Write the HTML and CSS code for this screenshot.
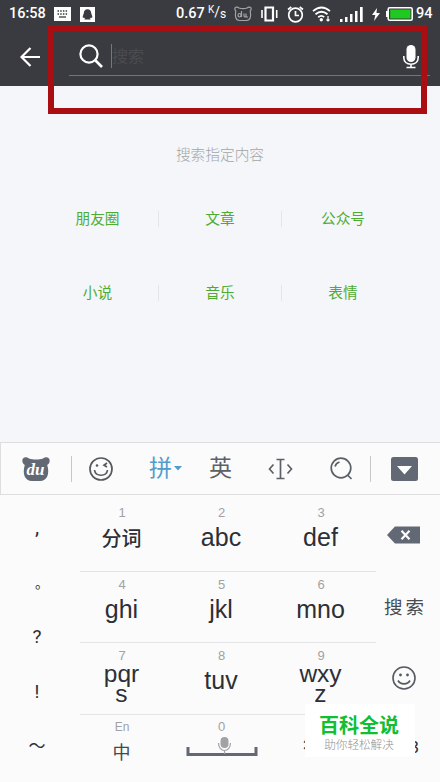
FILE: index.html
```html
<!DOCTYPE html>
<html lang="zh-CN">
<head>
    <meta charset="UTF-8">
    <meta name="viewport" content="width=device-width, initial-scale=1.0">
    <title>搜索</title>
    <link rel="stylesheet" href="styles.css">
</head>
<body>
    <div class="phone">
        <header class="top">
            <div class="status">
                <span class="time">16:58</span>
                <svg class="st-keys" width="17" height="14" viewBox="0 0 17 14"><path fill="#fff" d="M0 0h17v14H0z"/><path stroke="#3a3b40" stroke-width="1.5" stroke-dasharray="1.5 1.2" d="M3.5 4h10M3.5 7h10"/><path stroke="#3a3b40" stroke-width="1.3" d="M5 10h7"/></svg>
                <svg class="st-qq" width="15" height="15" viewBox="0 0 15 15"><path fill="#fff" d="M0 0h15v15H0z"/><path fill="#3a3b40" d="M7.500 2.300C5 2.300 3.800 4 3.800 6.300L2.700 9.500l.2 1.500 1.200-.6.900 1.400-.8.800h6.600l-.8-.8.900-1.400 1.200.6.200-1.500-1.100-3.200C11.200 4 10 2.300 7.500 2.300z"/></svg>
                <span class="speed">0.67</span>
                <span class="unit"><sup>K</sup>/<sub>s</sub></span>
                <svg class="st-bear" width="18" height="16" viewBox="0 0 18 16" fill="none" stroke="#a3a4a7" stroke-width="1.200"><path d="M5 2C3 .2.700 1.200.8 3c0 1 .7 1.500 1 2-1 5-.3 9.500 3.700 9.500h7c4 0 4.700-4.500 3.700-9.500.3-.5 1-1 1-2C17.300 1.200 15 .2 13 2 10 3 8 3 5 2z"/><path d="M7.500 5v6M5.500 7.500c-2 0-2 3.500 0 3.500s2-3.500 0-3.500M10 7.500V10q1 2 2 0V7.500V11h2"/></svg>
                <svg class="st-vib" width="17" height="16" viewBox="0 0 17 16" fill="none" stroke="#fff"><path stroke-width="2.200" d="M4.500 1.500h7.500v13H4.500z"/><path stroke-width="1.600" d="M1 4v8M15.700 4v8"/></svg>
                <svg class="st-alarm" width="17" height="17" viewBox="0 0 17 17" fill="none" stroke="#fff" stroke-width="1.700"><circle cx="8.500" cy="9" r="6.800"/><path d="M8.500 5v4.500H12M1 3.500L4.300 1M16 3.500L12.700 1"/></svg>
                <svg class="st-wifi" width="19" height="16" viewBox="0 0 19 16" fill="none" stroke="#fff" stroke-width="1.800"><path d="M1 5.200q8.500-7.500 17 0M3.500 8.300q6-5.200 12 0M6.200 11.200q3.300-2.600 6 0"/><circle cx="9.300" cy="13.700" r="1.700" fill="#fff" stroke="none"/><path stroke-width="1.200" d="M16 10v5M14.500 13.500L16 15l1.500-1.500"/></svg>
                <svg class="st-signal" width="23" height="15" viewBox="0 0 23 15"><path fill="#fff" d="M0 12h2.500v3H0zM5 10h2.500v5H5zM10 7h2.500v8H10zM15 4h2.500v11H15zM20 0h2.700v15H20z"/></svg>
                <svg class="st-bolt" width="8" height="13" viewBox="0 0 8 13"><path fill="#fff" d="M5 0L0 7h3.300L2 13l6-8H4.500z"/></svg>
                <svg class="st-battery" width="27" height="14" viewBox="0 0 27 14"><path fill="#fff" d="M0 4h3v6H0z"/><rect x="2.200" y=".8" width="24" height="12.400" rx="1.500" fill="#3a3b40" stroke="#fff" stroke-width="1.600"/><path fill="#1fc91f" d="M4.200 2.500H24.500v9H4.200z"/></svg>
                <span class="percent">94</span>
            </div>
            <div class="search-bar">
                <svg class="back" width="20" height="20" viewBox="0 0 20 20" fill="none" stroke="#fff" stroke-width="2.200"><path d="M20 10H2M10.500 1L1.500 10l9 9"/></svg>
                <div class="field">
                    <svg class="search-icon" width="24" height="24" viewBox="0 0 24 24" fill="none" stroke="#fff" stroke-width="2.200"><circle cx="10" cy="10" r="8.600"/><path stroke-width="2.600" d="M16 16l7 7"/></svg>
                    <span class="placeholder">搜索</span>
                    <svg class="mic" width="16" height="25" viewBox="0 0 16 25"><rect x="3.500" y="1" width="9" height="17" rx="4.500" fill="#fff"/><path fill="none" stroke="#fff" stroke-width="1.600" d="M.8 12v1.500c0 4 3 6.700 7.200 6.700s7.200-2.700 7.200-6.700V12M8 20v3M3.500 23.500h9"/></svg>
                </div>
            </div>
        </header>

        <main class="content">
            <p class="hint">搜索指定内容</p>
            <div class="topics">
                <a>朋友圈</a><a>文章</a><a>公众号</a>
                <a>小说</a><a>音乐</a><a>表情</a>
            </div>
        </main>

        <section class="keyboard">
            <div class="toolbar">
                <svg class="tb-bear" width="28" height="26" viewBox="0 0 28 26"><path fill="#626974" d="M7 2.500C4 0 0 1.500.3 5c.1 2 1.200 3.200 2.500 4C0 18 3 25 10 25h8c7 0 10-7 7.200-16 1.300-.8 2.400-2 2.500-4C28 1.500 24 0 21 2.500c-4 1.300-10 1.300-14 0z"/><text x="13.500" y="18.500" class="du">du</text></svg>
                <i class="bar bar-left"></i>
                <svg class="tb-smile" width="24" height="24" viewBox="0 0 24 24" fill="none" stroke="#555a61" stroke-width="1.700"><circle cx="12" cy="12" r="11"/><path d="M5.500 13c1 7 12 7 13 0M18 6l-3 2.200 3 1.800"/><circle cx="8" cy="8.500" r="1.300" fill="#555a61" stroke="none"/></svg>
                <span class="pin">拼</span>
                <svg class="tb-caret" width="8" height="5" viewBox="0 0 8 5"><path fill="#519ccd" d="M0 0h8L4 4.500z"/></svg>
                <span class="ying">英</span>
                <svg class="tb-cursor" width="25" height="22" viewBox="0 0 25 22" fill="none" stroke="#5c6168" stroke-width="1.700"><path d="M12.500 1.500v19M8.500 1.500h8M8.500 20.500h8M5.500 6.500L1.500 11l4 4.500M19.500 6.500l4 4.500-4 4.500"/></svg>
                <svg class="tb-search" width="23" height="23" viewBox="0 0 23 23" fill="none" stroke="#5c6168" stroke-width="1.700"><circle cx="11" cy="11" r="9.800"/><path d="M5 9.500Q6 6 9.500 5M17.500 18l4 4"/></svg>
                <i class="bar bar-right"></i>
                <svg class="tb-down" width="27" height="24" viewBox="0 0 27 24"><rect width="27" height="24" rx="2.500" fill="#626974"/><path fill="#fff" d="M6 9h15l-7.500 8.500z"/></svg>
            </div>
            <div class="keys">
                <div class="marks">
                    <span>,</span><span>。</span><span>?</span><span>!</span><span>～</span>
                </div>
                <div class="letters">
                    <div class="key"><small>1</small><b class="word">分词</b></div>
                    <div class="key"><small>2</small><b>abc</b></div>
                    <div class="key"><small>3</small><b>def</b></div>
                    <div class="key"><small>4</small><b>ghi</b></div>
                    <div class="key"><small>5</small><b>jkl</b></div>
                    <div class="key"><small>6</small><b>mno</b></div>
                    <div class="key"><small>7</small><b class="two">pqr<br>s</b></div>
                    <div class="key"><small>8</small><b>tuv</b></div>
                    <div class="key"><small>9</small><b class="two">wxy<br>z</b></div>
                    <div class="key last"><small class="en">En</small><b class="zh">中</b></div>
                    <div class="key last"><small>0</small>
                        <svg class="space" width="72" height="22" viewBox="0 0 72 22"><path fill="none" stroke="#626974" stroke-width="3" d="M2 10v7.500h68V10"/><rect x="34.500" y="0" width="8" height="11" rx="4" fill="#a0a2a5"/><path fill="none" stroke="#a0a2a5" stroke-width="1.200" d="M32.500 6c0 10 12 10 12 0M38.500 13v4"/></svg>
                    </div>
                    <div class="key last"><b class="symbol">符号</b></div>
                </div>
                <div class="actions">
                    <svg class="delete" width="33" height="18" viewBox="0 0 33 18"><path fill="#626974" d="M8 .5h25v17H8L0 9z"/><path stroke="#fff" stroke-width="2.200" d="M14.500 4.800l8 8.400M22.500 4.800l-8 8.400"/></svg>
                    <span class="go">搜索</span>
                    <svg class="face" width="24" height="24" viewBox="0 0 24 24" fill="none" stroke="#555a61" stroke-width="1.600"><circle cx="12" cy="12" r="11"/><path d="M6 14.500c2.500 4.500 9.500 4.500 12 0"/><g fill="#555a61" stroke="none"><circle cx="8.500" cy="9" r="1.400"/><circle cx="15.500" cy="9" r="1.400"/></g></svg>
                    <span class="num">123</span>
                </div>
            </div>
        </section>

        <div class="highlight"></div>
        <div class="brand">
            <strong>百科全说</strong>
            <span>助你轻松解决</span>
        </div>
    </div>
</body>
</html>
```
FILE: styles.css
```css
* {
    box-sizing: border-box;
}
body {
    margin: 0;
    font-family: Roboto, "Noto Sans CJK SC", sans-serif;
}
svg {
    display: block;
    flex: none;
}
.phone {
    position: relative;
    width: 440px;
    height: 782px;
    overflow: hidden;
    display: flex;
    flex-direction: column;
    background: #f4f6f9;
}

/* header */
.top {
    height: 86px;
    background: #3a3b40;
    color: #fff;
}
.status {
    display: flex;
    align-items: center;
    height: 28px;
    padding-left: 9px;
    font-size: 14.5px;
    font-weight: 500;
    line-height: 28px;
    white-space: nowrap;
}
.time {
    width: 45px;
}
.st-qq {
    margin-left: 9px;
}
.speed {
    width: 32px;
    margin-left: 81px;
}
.unit {
    display: flex;
    width: 26px;
    font-size: 14px;
    font-weight: normal;
}
.unit sup,
.unit sub {
    font-size: 10px;
    line-height: 23px;
}
.unit sub {
    font-size: 12px;
    line-height: 32px;
}
.st-vib {
    margin-left: 9px;
}
.st-alarm {
    margin-left: 9px;
}
.st-wifi {
    margin-left: 8px;
}
.st-signal {
    margin-left: 9px;
}
.st-bolt {
    margin-left: 9px;
}
.st-battery {
    margin-left: 6px;
}
.percent {
    margin-left: 3px;
}
.search-bar {
    display: flex;
    height: 48px;
    padding-left: 20px;
}
.back {
    margin-top: 19px;
}
.field {
    display: flex;
    width: 361px;
    margin-left: 29px;
    padding-left: 10px;
    border-bottom: 1px solid #4a963d;
}
.search-icon {
    margin-top: 16px;
}
.placeholder {
    height: 24px;
    margin: 16px 0 0 8px;
    border-left: 1px solid #77787c;
    color: #4a4b4f;
    font-size: 16px;
    line-height: 25px;
}
.mic {
    margin: 16px 11px 0 auto;
}

/* search topics */
.content {
    height: 356px;
    padding-top: 56px;
}
.hint {
    margin: 0;
    color: #a3a5a7;
    font-size: 14.7px;
    font-weight: 300;
    line-height: 26px;
    text-align: center;
}
.topics {
    display: grid;
    grid-template-columns: repeat(3, 122.5px);
    row-gap: 57.5px;
    justify-content: center;
    margin-top: 43px;
    padding-left: 1px;
}
.topics a {
    height: 16px;
    border-right: 1px solid #e3e5e8;
    color: #4eac31;
    font-size: 14.7px;
    line-height: 17px;
    text-align: center;
}
.topics a:nth-child(3n) {
    border-right: 0;
}

/* keyboard */
.keyboard {
    height: 340px;
    background: #fbfbfb;
    color: #2c3036;
}
.toolbar {
    display: flex;
    align-items: center;
    height: 53px;
    padding-left: 21px;
    border: 1px solid #dedede;
    border-right: 0;
}
.du {
    fill: #fff;
    font: italic bold 17px "Liberation Serif", serif;
    text-anchor: middle;
}
.bar {
    width: 1px;
    height: 26px;
    background: #c6c8ca;
}
.bar-left {
    margin-left: 21px;
}
.tb-smile {
    margin-left: 17px;
}
.pin,
.ying {
    width: 23px;
    color: #5c6168;
    font-size: 23px;
    line-height: 28px;
}
.pin {
    margin-left: 36px;
    color: #519ccd;
}
.tb-caret {
    margin-left: 2px;
}
.ying {
    margin-left: 27px;
}
.tb-cursor {
    margin-left: 36px;
}
.tb-search {
    margin-left: 37px;
}
.bar-right {
    margin-left: 17px;
}
.tb-down {
    margin-left: 20px;
}
.keys {
    display: flex;
    height: 287px;
}
.marks {
    display: grid;
    grid-template-rows: repeat(5, 52.6px);
    width: 80px;
    padding: 13px 6px 0 0;
    font-size: 19px;
    line-height: 52px;
    text-align: center;
}
.marks span:first-child {
    font-size: 21px;
    line-height: 38px;
}
.marks span:nth-child(2) {
    padding-left: 10px;
    font-size: 14px;
    line-height: 45px;
}
.marks span:nth-child(3) {
    line-height: 47px;
}
.marks span:last-child {
    font-size: 17px;
    line-height: 57px;
}
.letters {
    display: grid;
    grid-template-columns: 84px 115px 97px;
    grid-template-rows: 77px 71px 72px 67px;
    width: 296px;
}
.key {
    display: flex;
    flex-direction: column;
    align-items: center;
    padding-top: 6px;
    border-bottom: 1px solid #e2e3e4;
    font-family: "Liberation Sans", "Noto Sans CJK SC", sans-serif;
}
.key:nth-child(-n+3) {
    padding-top: 11px;
}
.key:nth-child(3n) {
    padding-right: 13px;
}
.key small {
    color: #a0a2a5;
    font-size: 13px;
    line-height: 14px;
}
.key b {
    margin-top: 2px;
    margin-right: 1px;
    font-size: 25px;
    font-weight: normal;
    line-height: 30px;
}
.key .word {
    font-size: 20px;
    font-weight: 500;
    line-height: 34px;
}
.key .two {
    margin-top: 1px;
    font-size: 24.5px;
    line-height: 20px;
    text-align: center;
}
.key.last {
    border-bottom: 0;
    padding-top: 5px;
}
.key small.en {
    font-size: 12px;
}
.key .zh {
    margin-top: 4px;
    color: #44484d;
    font-size: 18px;
}
.key .symbol {
    margin: 12px 0 0;
    font-size: 18px;
}
.space {
    margin-top: 3px;
}
.actions {
    display: grid;
    grid-template-rows: 77px 71px 72px 67px;
    justify-items: center;
    align-items: center;
    width: 64px;
    padding-right: 7px;
}
.delete {
    margin: 2px 0 0 -2px;
}
.go {
    margin: 0 0 4px 2px;
    color: #484c52;
    font-size: 18.5px;
    letter-spacing: 3px;
    white-space: nowrap;
}
.face {
    margin: 0 2px 2px 0;
}
.num {
    margin: 0 0 2px;
    font: 17px "Liberation Sans", sans-serif;
}

/* overlays */
.highlight {
    position: absolute;
    top: 25px;
    left: 48px;
    width: 379px;
    height: 89px;
    border: 6px solid #a90e13;
}
.brand {
    position: absolute;
    top: 704px;
    left: 305px;
    width: 110px;
    height: 53px;
    padding-right: 2px;
    background: #fff;
    text-align: center;
}
.brand strong,
.brand span {
    display: block;
}
.brand strong {
    padding-top: 10px;
    color: #12be32;
    font-size: 20px;
    font-weight: 700;
    line-height: 25px;
}
.brand span {
    color: #929292;
    font-size: 11.6px;
    font-weight: 300;
    line-height: 13px;
}
```
